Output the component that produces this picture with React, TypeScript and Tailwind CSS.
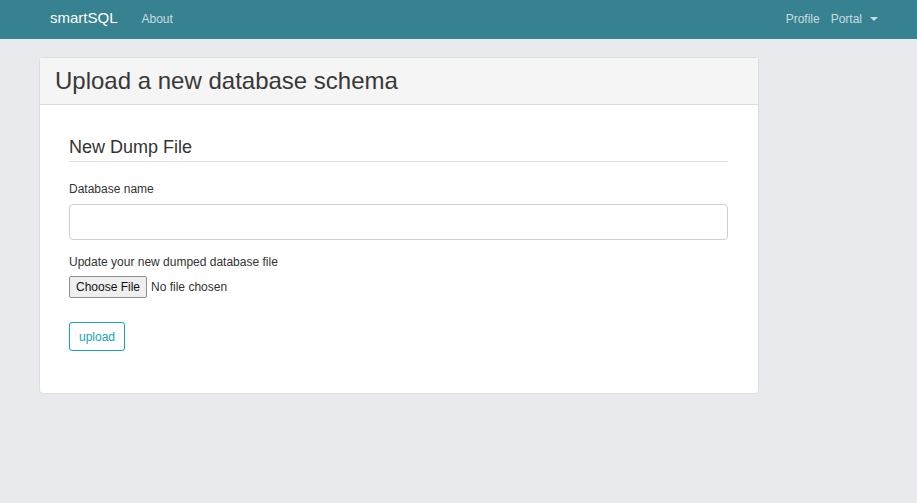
import React from "react";

export default function App() {
  return (
    <div className="min-h-screen bg-[#e9eaed] font-['Liberation_Sans',Arial,sans-serif] text-[#333]">
      <nav className="flex h-[39px] items-center justify-between bg-[#378290] pb-[2px] pl-[50px] pr-[39px]">
        <div className="flex items-center">
          <span className="text-[15px] text-white">smartSQL</span>
          <span className="ml-[24px] text-[12px] text-[#c9dde1]">About</span>
        </div>
        <div className="flex items-center text-[12px] text-[#c9dde1]">
          <span>Profile</span>
          <span className="ml-[11px]">Portal</span>
          <span className="ml-[8px] h-0 w-0 border-x-[4px] border-t-[4px] border-x-transparent border-t-[#c9dde1]" />
        </div>
      </nav>

      <div className="ml-[39px] mt-[18px] w-[720px] rounded-[4px] border border-[#dcdcdc] bg-white">
        <div className="flex h-[47px] items-center border-b border-[#dcdcdc] bg-[#f5f5f5] px-[15px]">
          <h1 className="text-[24px] text-[#383838]">Upload a new database schema</h1>
        </div>
        <div className="pb-[42px] pl-[29px] pr-[30px] pt-[30px]">
          <h4 className="border-b border-[#e0e0e0] pb-[2px] text-[18px] leading-[24px] text-[#333]">New Dump File</h4>
          <label className="mt-[18px] block text-[12px] text-[#333]">Database name</label>
          <input
            type="text"
            className="mt-[6px] block h-[36px] w-full rounded-[4px] border border-[#ccd0d6] bg-white px-3 outline-none"
          />
          <label className="mt-[13px] block text-[12px] text-[#333]">Update your new dumped database file</label>
          <div className="mt-[5px] flex items-center text-[12px]">
            <span className="rounded-[2px] border border-[#8f8f8f] bg-[#efefef] px-[6px] py-[3px] leading-[14px] text-[#111]">Choose File</span>
            <span className="ml-[4px] text-[#333]">No file chosen</span>
          </div>
          <button className="mt-[24px] block h-[29px] w-[56px] rounded-[3px] border border-[#17a2b8] bg-white text-[12px] text-[#17a2b8]">
            upload
          </button>
        </div>
      </div>
    </div>
  );
}
